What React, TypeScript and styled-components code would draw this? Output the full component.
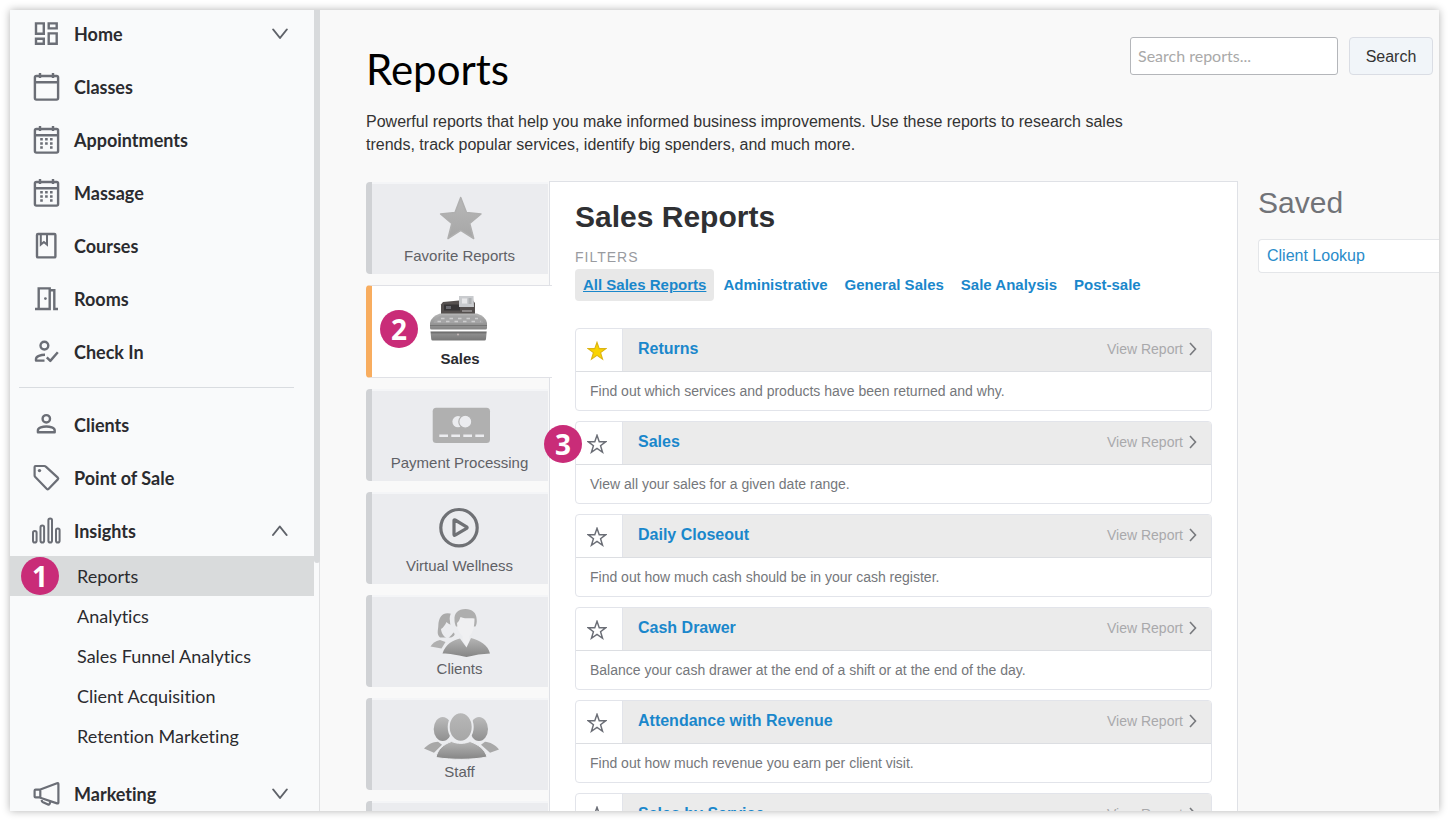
import React from "react";
import styled, { createGlobalStyle, css } from "styled-components";

const sans = `"Liberation Sans", Arial, sans-serif`;
const brand = `Lato, "Open Sans", sans-serif`;

const GlobalStyle = createGlobalStyle`
  *, *::before, *::after { box-sizing: border-box; }
  body { margin: 0; background: #fff; color: #333; font-family: ${sans}; }
  h1, h2, h3, p, ul { margin: 0; padding: 0; }
  ul { list-style: none; }
  a { text-decoration: none; color: inherit; }
  button { font: inherit; color: inherit; background: none; border: 0; padding: 0; cursor: pointer; text-align: left; }
`;

const Page = styled.div`
  height: 100vh;
  padding: 10px;
`;

const Frame = styled.div`
  display: flex;
  height: 100%;
  overflow: hidden;
  background: #f9f9f9;
  box-shadow: 0 0 8px rgba(0, 0, 0, 0.3);
`;

/* Sidebar */

const Sidebar = styled.aside`
  display: flex;
  flex: none;
  width: 310px;
  background: #f9fafb;
  font-family: ${brand};
  font-variant-ligatures: none;
  color: #2b2b2f;
`;

const Nav = styled.nav`
  flex: 1;
  overflow: hidden;
  padding-top: 12px;
`;

const NavGroup = styled.ul`
  display: flex;
  flex-direction: column;
  gap: 29px;
`;

const navRow = css`
  display: flex;
  align-items: center;
  gap: 13px;
  width: 100%;
  height: 24px;
  padding: 0 26px 0 21px;
  font-size: 18px;
  line-height: 24px;
  font-weight: 700;
`;

const NavLink = styled.a`
  ${navRow}
`;

const NavToggle = styled.button`
  ${navRow}
`;

const NavLabel = styled.span`
  flex: 1;
`;

const NavSvg = styled.svg`
  flex: none;
  width: 30px;
  height: 30px;
  fill: none;
  stroke: #6b6e76;
  stroke-width: 2.4;
  stroke-linejoin: round;
`;

const ChevronSvg = styled.svg`
  flex: none;
  width: 16px;
  height: 12px;
  fill: none;
  stroke: #5f6269;
  stroke-width: 2;
  stroke-linecap: round;
  stroke-linejoin: round;
`;

const Divider = styled.hr`
  margin: 23px 20px 25px 9px;
  border: 0;
  border-top: 1px solid #d9dce0;
`;

const SubNav = styled.ul`
  margin: 13px 0 26px;
`;

const SubItem = styled.li`
  position: relative;
`;

const SubLink = styled.a<{ $active?: boolean }>`
  display: block;
  padding-left: 67px;
  font-size: 18px;
  line-height: 40px;
  background: ${(p) => (p.$active ? "#d9dbdc" : "transparent")};
`;

const ScrollTrack = styled.div`
  flex: none;
  width: 6px;
  border-right: 1px solid #e0e1e3;
`;

const ScrollThumb = styled.div`
  width: 6px;
  height: 69%;
  border-radius: 0 0 3px 3px;
  background: #d8dadc;
`;

const StepBadge = styled.span<{ $left: number; $top: number }>`
  position: absolute;
  left: ${(p) => p.$left}px;
  top: ${(p) => p.$top}px;
  z-index: 2;
  width: 38px;
  height: 38px;
  border-radius: 50%;
  background: #c92c78;
  color: #fff;
  font: 700 28px/38px "Open Sans", "Noto Sans", sans-serif;
  text-align: center;
`;

/* Main area */

const Main = styled.main`
  flex: 1;
  min-width: 0;
  padding: 27px 0 0 46px;
`;

const Header = styled.header`
  display: flex;
  align-items: flex-start;
  justify-content: space-between;
  padding-right: 6px;
`;

const Title = styled.h1`
  margin-top: 7px;
  font: 400 42px/50px ${brand};
  color: #000;
`;

const Intro = styled.p`
  max-width: 790px;
  margin: 16px 0 25px;
  font-size: 16px;
  line-height: 23px;
`;

const SearchForm = styled.form`
  display: flex;
  flex: none;
  gap: 11px;
`;

const SearchInput = styled.input`
  width: 208px;
  height: 38px;
  padding: 0 7px 2px;
  border: 1px solid #b4b6ba;
  border-radius: 3px;
  background: #fff;
  font: 400 16px ${brand};
  &::placeholder { color: #a9a9a9; opacity: 1; }
`;

const SearchButton = styled.button`
  width: 84px;
  height: 38px;
  padding-top: 1px;
  border: 1px solid #dadde4;
  border-radius: 4px;
  background: #f1f5f9;
  font-size: 16px;
  text-align: center;
`;

const Columns = styled.div`
  display: flex;
  align-items: flex-start;
`;

const Categories = styled.div`
  display: flex;
  flex-direction: column;
  flex: none;
  gap: 11px;
  width: 183px;
  padding-top: 1px;
`;

const Category = styled.button<{ $active?: boolean }>`
  position: relative;
  display: flex;
  flex-direction: column;
  align-items: center;
  gap: 2px;
  height: 92px;
  margin-right: 1px;
  padding: 12px 1px 0 0;
  border-left: 6px solid #d0d2d5;
  border-radius: 4px 0 0 4px;
  background: #ebecef;
  box-shadow: inset 0 2px 0 #f4f5f7;
  color: #5f6166;
  font-size: 15px;
  line-height: 20px;
  ${(p) =>
    p.$active &&
    css`
      z-index: 1;
      height: 93px;
      margin-right: -3px;
      padding: 11px 4px 0 0;
      border: 1px solid #e0e1e6;
      border-left: 6px solid #f8ad5f;
      border-right: 0;
      background: #fff;
      box-shadow: none;
      color: #2b2b2f;
      font-weight: 700;
    `}
`;

const CategorySvg = styled.svg`
  width: 76px;
  height: 50px;
  overflow: visible;
`;

const Panel = styled.section`
  flex: 1;
  min-width: 0;
  padding: 18px 25px 25px;
  border: 1px solid #dfe1e6;
  background: #fff;
`;

const PanelTitle = styled.h2`
  font-size: 30px;
  line-height: 34px;
  color: #2f3033;
`;

const FilterHeading = styled.h3`
  margin-top: 13px;
  font-size: 14px;
  line-height: 20px;
  font-weight: 400;
  letter-spacing: 1px;
  color: #999ba0;
`;

const Filters = styled.nav`
  display: flex;
  gap: 1px;
  margin: 2px 0 27px;
`;

const FilterLink = styled.a<{ $active?: boolean }>`
  padding: 0 8px;
  border-radius: 4px;
  font-size: 15px;
  line-height: 32px;
  font-weight: 700;
  color: #1a87cb;
  ${(p) =>
    p.$active &&
    css`
      background: #e8e8e8;
      text-decoration: underline;
    `}
`;

const ReportList = styled.div`
  display: flex;
  flex-direction: column;
  gap: 10px;
`;

const ReportCard = styled.article`
  position: relative;
  border: 1px solid #e2e4ea;
  border-radius: 4px;
  background: #fff;
`;

const ReportHead = styled.div`
  display: flex;
  height: 43px;
  border-bottom: 1px solid #dcdee2;
`;

const StarButton = styled.button`
  display: flex;
  align-items: center;
  justify-content: center;
  flex: none;
  width: 47px;
  padding: 2px 4px 0 0;
  border-right: 1px solid #e2e4ea;
`;

const ReportBar = styled.div`
  display: flex;
  flex: 1;
  align-items: center;
  justify-content: space-between;
  padding: 0 14px 2px 15px;
  border-radius: 0 3px 0 0;
  background: #ebebeb;
`;

const ReportTitle = styled.h3`
  font-size: 16px;
  line-height: 20px;
  color: #1a87cb;
`;

const ViewLink = styled.a`
  display: flex;
  align-items: center;
  gap: 6px;
  font-size: 14px;
  line-height: 20px;
  color: #a9a9ab;
`;

const ReportText = styled.p`
  padding: 9px 14px;
  font-size: 14px;
  line-height: 20px;
  color: #75777b;
`;

const Saved = styled.aside`
  flex: none;
  width: 201px;
  padding: 5px 0 0 20px;
`;

const SavedTitle = styled.h2`
  font-size: 30px;
  line-height: 34px;
  font-weight: 400;
  color: #717378;
`;

const SavedLink = styled.a`
  display: block;
  margin-top: 19px;
  padding: 0 8px;
  border: 1px solid #e4e6e9;
  border-right: 0;
  border-radius: 4px 0 0 4px;
  background: #fff;
  font-size: 16px;
  line-height: 32px;
  color: #2a8cca;
`;

/* Drawings */

const Calendar = ({ dots }: { dots?: boolean }) => (
  <NavSvg viewBox="0 0 30 30" aria-hidden="true">
    <rect x="3.9" y="4" width="23.2" height="23.6" rx="1.5" />
    <path d="M4 10.2h23M9 1v5M22 1v5" />
    {dots && (
      <path
        stroke="none"
        fill="#6b6e76"
        d="M9.2 13h2.6v2.6H9.2zM14.1 13h2.6v2.6h-2.6zM19 13h2.6v2.6H19zM9.2 17.2h2.6v2.6H9.2zM14.1 17.2h2.6v2.6h-2.6zM19 17.2h2.6v2.6H19zM9.2 21.2h2.6v2.6H9.2zM19 21.2h2.6v2.6H19z"
      />
    )}
  </NavSvg>
);

const NavIcon = ({ name }: { name: string }) => {
  if (name === "calendar") return <Calendar />;
  if (name === "calendar-dots") return <Calendar dots />;
  return (
    <NavSvg viewBox="0 0 30 30" aria-hidden="true">
      {name === "home" && (
        <path
          strokeLinejoin="miter"
          d="M5 4.4h7.8v10.4H5zM17.7 4.4h8v5h-8zM5 19.7h7.8v5.1H5zM17.7 14.4h8v10.4h-8z"
        />
      )}
      {name === "book" && (
        <>
          <rect x="6" y="3" width="18.4" height="23.4" rx="1" />
          <path strokeLinejoin="miter" strokeWidth="2" d="M9.8 3v10.6l3.1-2.6 3.1 2.6V3" />
        </>
      )}
      {name === "door" && (
        <>
          <path strokeLinejoin="miter" d="M4 25h3.7V4.4h11V25H7.7M18.7 6.2h4.6V25H27" />
          <circle cx="14.4" cy="14.6" r="1.4" fill="#6b6e76" stroke="none" />
        </>
      )}
      {name === "check-in" && (
        <>
          <circle cx="13.4" cy="8.6" r="3.9" />
          <path d="M14 17.8c-4.2 0-9 1.7-9 4.2v1.6h8.5M15.8 20.400l3.5 3.5 7.5-8.6" />
        </>
      )}
      {name === "person" && (
        <>
          <circle cx="15.3" cy="8.8" r="3.7" />
          <path d="M6.9 22.3v-1.9c0-2.7 4.9-3.9 8.4-3.9s8.4 1.2 8.4 3.9v1.9z" />
        </>
      )}
      {name === "tag" && (
        <>
          <path
            strokeWidth="2.2"
            d="M4.5 3h8.8q.9 0 1.5.6L26.8 14.6q.9.9 0 1.8L17.5 26q-.8.8-1.6 0L4.3 14q-.7-.7-.7-1.500V4q0-1 .9-1z"
          />
          <circle cx="8.5" cy="7.6" r="1.7" fill="#6b6e76" stroke="none" />
        </>
      )}
      {name === "bars" && (
        <g strokeWidth="2">
          <rect x="2" y="15" width="3.6" height="11.5" rx="1.8" />
          <rect x="9.5" y="9.6" width="3.6" height="16.9" rx="1.8" />
          <rect x="17.4" y="2.4" width="3.6" height="24.1" rx="1.8" />
          <rect x="25" y="12.4" width="3.6" height="14.1" rx="1.8" />
        </g>
      )}
      {name === "megaphone" && (
        <path
          strokeWidth="2.2"
          d="M9.3 10.5 26 4.2q1.4-.4 1.4 1v18.2q0 1.4-1.4 1L9.3 18.700zM9.3 10.700H4.6q-1 0-1 1v5.7q0 1 1 1h4.7zM10.8 19.3v2.4q0 .8.7 1.2l5.5 2.7q.9.4 1.4-.4l1.1-2.6"
        />
      )}
    </NavSvg>
  );
};

const Chevron = ({ up }: { up?: boolean }) => (
  <ChevronSvg viewBox="0 0 16 12" aria-hidden="true">
    <path d={up ? "M1 10 7.800 1.500 14.600 10" : "M1.200 1.500 8 10 14.800 1.500"} />
  </ChevronSvg>
);

const Star = ({ filled }: { filled?: boolean }) => (
  <svg width="20" height="20" viewBox="0 0 18 18" aria-hidden="true">
    <path
      d="M9 1.2 11 6.9h6l-4.8 3.6 1.8 5.900L9 12.9l-5 3.5 1.8-5.900L1 6.900h6z"
      fill={filled ? "#fad400" : "none"}
      stroke={filled ? "#dcb414" : "#6b6e76"}
      strokeWidth={filled ? 1 : 1.3}
    />
  </svg>
);

const CategoryIcon = ({ name }: { name: string }) => (
  <CategorySvg viewBox="0 0 76 50" aria-hidden="true">
    <defs>
      <linearGradient id="shade" x1="0" y1="0" x2="0" y2="1">
        <stop offset="0" stopColor="#b8b8b8" />
        <stop offset="1" stopColor="#a6a6a6" />
      </linearGradient>
      <linearGradient id="metal" x1="0" y1="0" x2="0" y2="1">
        <stop offset="0" stopColor="#b5b5b5" />
        <stop offset="1" stopColor="#858585" />
      </linearGradient>
      <linearGradient id="drawer" x1="0" y1="0" x2="0" y2="1">
        <stop offset="0" stopColor="#5f5f5f" />
        <stop offset="0.3" stopColor="#8d8d8d" />
        <stop offset="1" stopColor="#777" />
      </linearGradient>
    </defs>
    {name === "star" && (
      <path
        d="M38.7 3.500 44.5 18.500 59 20 47.7 29.5 51.7 44.5 38.7 36.3 26 44.5 29.8 29.5 18.6 20 33 18.500z"
        fill="url(#shade)"
        stroke="#afafaf"
        strokeWidth="1.5"
        strokeLinejoin="round"
      />
    )}
    {name === "register" && (
      <>
        <path d="M19 7.5 21 5l16-1.5h14L53 6v12H19z" fill="#55504f" />
        <path d="M22 7.5h16v6H22z" fill="#363436" />
        <path d="M24 9h5v3h-5z" fill="#6a6a70" />
        <path d="M40 13h10v2H40z" fill="#8c8888" />
        <path d="M37-1h14.5L52 10H37z" fill="#c9cbce" />
        <path d="M40 1.5h5v5h-5z" fill="#e8e8ea" />
        <path d="M46.5 2h3M46.5 4h3M46.5 6h3" stroke="#8b8d91" strokeWidth="0.8" />
        <path d="M18 16.500Q9 19.500 8 26v5q0 1.500 1.500 1.500h54q1.500 0 1.500-1.500v-5Q64 19.500 55 16.500z" fill="url(#metal)" />
        <path d="M19 18.500h35q6 2.500 7.500 7.500h-50q1.500-5 7.500-7.500z" fill="#a4a4a5" />
        <path d="M19 21.500h37M15.500 24.500h43" stroke="#cdcdcf" strokeWidth="1.5" strokeDasharray="3.5 5" />
        <path d="M8 28.5h57" stroke="#757575" strokeWidth="1" />
        <path d="M8.500 34.500h56.200l-.7 7.500q-.2 1.500-1.500 1.500H10.700q-1.300 0-1.500-1.500z" fill="url(#drawer)" />
        <circle cx="36" cy="37.5" r="1" fill="#c4b8b8" />
      </>
    )}
    {name === "card" && (
      <>
        <rect x="10.7" y="6.7" width="57.3" height="35.3" rx="3.5" fill="#b0b0b0" />
        <circle cx="36" cy="20.7" r="5.6" fill="#ebecef" />
        <circle cx="43.3" cy="20.7" r="6.5" fill="#ebecef" stroke="#b0b0b0" strokeWidth="1.2" />
        <path d="M17.300 34.700H26M29.300 34.700H38M41.300 34.700H50M53.300 34.700H62" stroke="#ebecef" strokeWidth="2.6" />
      </>
    )}
    {name === "play" && (
      <g fill="none" stroke="#6f7175" strokeWidth="3.2" strokeLinejoin="round">
        <circle cx="37" cy="23.7" r="18.2" />
        <path d="M32 16.6q0-1.2 1.1-.6l11.5 6.8q1.1.8 0 1.6l-11.500 6.800q-1.100.6-1.100-.6z" />
      </g>
    )}
    {name === "clients" && (
      <>
        <path
          d="M18 30.5c-3.500-3-2-7-1.700-11.500C16.500 10.500 20 6.300 25.500 6.300c3.500 0 6 1.200 7.500 3.700v17c-1.500 3-4 4-7 3.500z"
          fill="#ababab"
        />
        <path d="M8.5 39.500c1.500-3 5-5.300 9.500-6.500l5.500 2-4 6.500z" fill="#b0b0b0" />
        <path
          d="M19 22c2.500-1.500 4-4 5.500-7 2 2 5 3.500 8 4v6c-1.500 1-2.500 2.500-4 4l-2.500 2.500c-4-1-6.500-5-7-9.500z"
          fill="#ebecef"
        />
        <path d="M38.5 1C31 1 26.500 7 28 14.500c0 2 .5 4.500 1.500 6L33 28v8h14v-8l5-7.500c1-2 2.500-4 2.500-6C55.500 7 50.500 1.500 43.500 2z" fill="#ebecef" />
        <path d="M43.500 2c-7.500 0-11.500 4-11 11 0 3 .8 5 1.500 6.500h19.500c1-2 1.500-4 1.200-7C54.500 5.500 50 2 43.500 2z" fill="#aeaeae" />
        <path d="M35 16c2-1.500 2.500-3.500 3.500-6 4 2 10 1 14 1.500 0 8-1.500 14-5 17.500v6l-3 4-4-6v-4c-3.500-3-5.500-7.500-5.500-13z" fill="#f0f0f2" />
        <path
          d="M38 31.500c-7 1.800-14.500 5.500-17.500 15C28 46.500 34 48 44.500 50 53 48 60 46.800 68 46.500 66 38 58 33.500 49 31l-4.500 9.500z"
          fill="url(#metal)"
        />
      </>
    )}
    {name === "staff" && (
      <>
        <ellipse cx="20.7" cy="19" rx="9" ry="12" fill="url(#metal)" opacity="0.9" />
        <ellipse cx="57" cy="19" rx="9" ry="12" fill="url(#metal)" opacity="0.9" />
        <path d="M2 38.500c4-4.500 9-6.500 14-6.800l4 3-8 8z" fill="#a8a8a8" />
        <path d="M77 39.500c-4-5-9-7.500-14-7.800l-4 3 9 8z" fill="#a8a8a8" />
        <ellipse cx="38.7" cy="17" rx="12" ry="14.8" fill="url(#shade)" stroke="#ebecef" strokeWidth="2" />
        <path
          d="M14 47.500c1.500-8 7-13 15.500-16 6 2.500 13 2.500 18.500 0 8.500 3 15 8 17 15.500C50 50 30 50 14 47.500z"
          fill="url(#metal)"
          stroke="#ebecef"
          strokeWidth="1"
        />
      </>
    )}
  </CategorySvg>
);

/* Content */

const topNav = [
  { label: "Classes", icon: "calendar" },
  { label: "Appointments", icon: "calendar-dots" },
  { label: "Massage", icon: "calendar-dots" },
  { label: "Courses", icon: "book" },
  { label: "Rooms", icon: "door" },
  { label: "Check In", icon: "check-in" },
];

const middleNav = [
  { label: "Clients", icon: "person" },
  { label: "Point of Sale", icon: "tag" },
];

const insights = ["Reports", "Analytics", "Sales Funnel Analytics", "Client Acquisition", "Retention Marketing"];

const categories = [
  { label: "Favorite Reports", icon: "star" },
  { label: "Sales", icon: "register" },
  { label: "Payment Processing", icon: "card" },
  { label: "Virtual Wellness", icon: "play" },
  { label: "Clients", icon: "clients" },
  { label: "Staff", icon: "staff" },
  { label: "", icon: "" },
];

const filters = ["All Sales Reports", "Administrative", "General Sales", "Sale Analysis", "Post-sale"];

const reports = [
  { title: "Returns", text: "Find out which services and products have been returned and why.", favorite: true },
  { title: "Sales", text: "View all your sales for a given date range.", step: 3 },
  { title: "Daily Closeout", text: "Find out how much cash should be in your cash register." },
  { title: "Cash Drawer", text: "Balance your cash drawer at the end of a shift or at the end of the day." },
  { title: "Attendance with Revenue", text: "Find out how much revenue you earn per client visit." },
  { title: "Sales by Service", text: "" },
];

const NavEntry = ({ label, icon }: { label: string; icon: string }) => (
  <li>
    <NavLink href="#">
      <NavIcon name={icon} />
      <NavLabel>{label}</NavLabel>
    </NavLink>
  </li>
);

const NavSection = ({ label, icon, open }: { label: string; icon: string; open?: boolean }) => (
  <li>
    <NavToggle type="button" aria-expanded={!!open}>
      <NavIcon name={icon} />
      <NavLabel>{label}</NavLabel>
      <Chevron up={open} />
    </NavToggle>
  </li>
);

export default function App() {
  return (
    <Page>
      <GlobalStyle />
      <Frame>
        <Sidebar>
          <Nav>
            <NavGroup>
              <NavSection label="Home" icon="home" />
              {topNav.map((item) => (
                <NavEntry key={item.label} {...item} />
              ))}
            </NavGroup>
            <Divider />
            <NavGroup>
              {middleNav.map((item) => (
                <NavEntry key={item.label} {...item} />
              ))}
              <NavSection label="Insights" icon="bars" open />
            </NavGroup>
            <SubNav>
              {insights.map((label, i) => (
                <SubItem key={label}>
                  <SubLink href="#" $active={i === 0}>
                    {label}
                  </SubLink>
                  {i === 0 && (
                    <StepBadge $left={11} $top={1}>
                      1
                    </StepBadge>
                  )}
                </SubItem>
              ))}
            </SubNav>
            <NavGroup>
              <NavSection label="Marketing" icon="megaphone" />
            </NavGroup>
          </Nav>
          <ScrollTrack>
            <ScrollThumb />
          </ScrollTrack>
        </Sidebar>

        <Main>
          <Header>
            <div>
              <Title>Reports</Title>
              <Intro>
                Powerful reports that help you make informed business improvements. Use these reports to research sales
                trends, track popular services, identify big spenders, and much more.
              </Intro>
            </div>
            <SearchForm role="search" onSubmit={(e) => e.preventDefault()}>
              <SearchInput type="text" aria-label="Search reports" placeholder="Search reports..." />
              <SearchButton type="submit">Search</SearchButton>
            </SearchForm>
          </Header>

          <Columns>
            <Categories>
              {categories.map(({ label, icon }) => (
                <Category key={icon} type="button" $active={label === "Sales"}>
                  <CategoryIcon name={icon} />
                  {label}
                  {label === "Sales" && (
                    <StepBadge $left={8} $top={24}>
                      2
                    </StepBadge>
                  )}
                </Category>
              ))}
            </Categories>

            <Panel>
              <PanelTitle>Sales Reports</PanelTitle>
              <FilterHeading>FILTERS</FilterHeading>
              <Filters aria-label="Filters">
                {filters.map((label, i) => (
                  <FilterLink key={label} href="#" $active={i === 0}>
                    {label}
                  </FilterLink>
                ))}
              </Filters>
              <ReportList>
                {reports.map(({ title, text, favorite, step }) => (
                  <ReportCard key={title}>
                    {step && (
                      <StepBadge $left={-32} $top={3}>
                        {step}
                      </StepBadge>
                    )}
                    <ReportHead>
                      <StarButton type="button" aria-label={`Favorite ${title}`} aria-pressed={!!favorite}>
                        <Star filled={favorite} />
                      </StarButton>
                      <ReportBar>
                        <ReportTitle>
                          <a href="#">{title}</a>
                        </ReportTitle>
                        <ViewLink href="#">
                          View Report
                          <svg width="8" height="14" viewBox="0 0 8 14" aria-hidden="true">
                            <path d="M1 1l5.5 6L1 13" fill="none" stroke="#77797d" strokeWidth="1.6" />
                          </svg>
                        </ViewLink>
                      </ReportBar>
                    </ReportHead>
                    <ReportText>{text}</ReportText>
                  </ReportCard>
                ))}
              </ReportList>
            </Panel>

            <Saved>
              <SavedTitle>Saved</SavedTitle>
              <SavedLink href="#">Client Lookup</SavedLink>
            </Saved>
          </Columns>
        </Main>
      </Frame>
    </Page>
  );
}
